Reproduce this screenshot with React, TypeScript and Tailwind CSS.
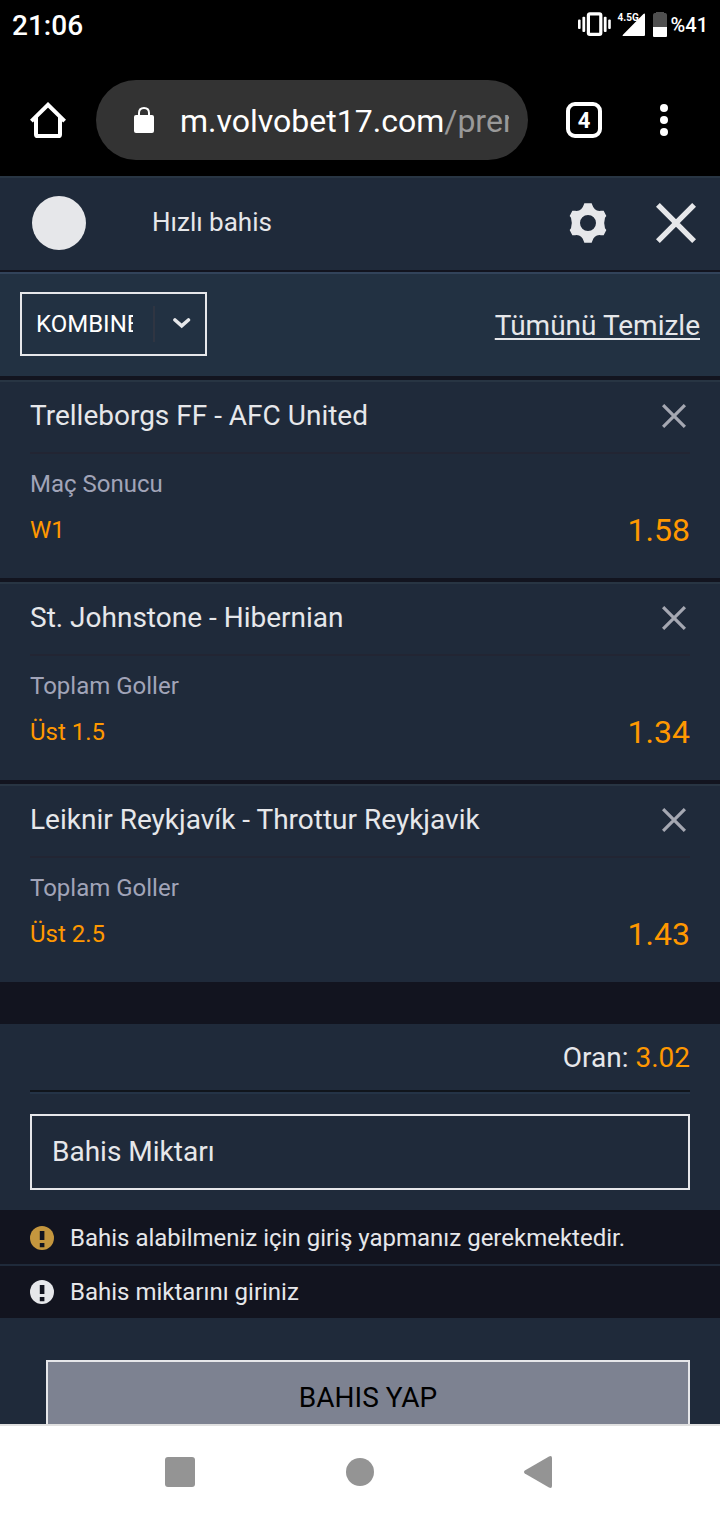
import React, { useState } from "react";

type Bet = { id: number; match: string; market: string; pick: string; odd: string };

const BETS: Bet[] = [
  { id: 1, match: "Trelleborgs FF - AFC United", market: "Maç Sonucu", pick: "W1", odd: "1.58" },
  { id: 2, match: "St. Johnstone - Hibernian", market: "Toplam Goller", pick: "Üst 1.5", odd: "1.34" },
  { id: 3, match: "Leiknir Reykjavík - Throttur Reykjavik", market: "Toplam Goller", pick: "Üst 2.5", odd: "1.43" },
];

function StatusBar() {
  return (
    <div className="flex h-[50px] items-center justify-between px-3 text-white">
      <time className="pt-0.5 text-[28px] leading-8 font-medium">21:06</time>
      <div className="flex items-center">
        <svg viewBox="0 0 34 26" className="mr-2 h-[26px] w-[34px]" fill="#fff" aria-hidden="true">
          <rect x="11.4" y="1.8" width="12.4" height="20.6" rx="1.4" fill="none" stroke="#fff" strokeWidth="3.2" />
          <rect x="5.4" y="4.8" width="2.8" height="15.2" rx="1" />
          <rect x="1" y="7.6" width="2.6" height="9.4" rx="1" />
          <rect x="26.8" y="4.8" width="2.8" height="15.2" rx="1" />
          <rect x="31.2" y="7.6" width="2.6" height="9.4" rx="1" />
        </svg>
        <div className="relative mr-2 h-[26px] w-[26px]">
          <svg viewBox="0 0 26 26" className="h-full w-full" aria-hidden="true">
            <path d="M4.2 22.4 24.4 2Q26 .6 26 2.8V23Q26 24 25 24H4.8Q2.6 24 4.2 22.4Z" fill="#fff" />
          </svg>
          <span className="absolute top-0 -left-px text-[10px] leading-3 font-bold">4.5G</span>
        </div>
        <svg viewBox="0 0 14 26" className="mr-1 h-[26px] w-[14px]" aria-hidden="true">
          <path d="M4 -1H10Q11 -1 11 0V1H12.5Q14 1.4 14 3V15H0V3Q0 1.4 1.5 1H3V0Q3 -1 4 -1Z" fill="#505050" />
          <path d="M0 15H14V24Q14 25 13 25H1Q0 25 0 24Z" fill="#fff" />
        </svg>
        <span className="text-xl leading-6 font-medium">%41</span>
      </div>
    </div>
  );
}

function BrowserBar() {
  return (
    <div className="flex items-center pt-[30px] pr-4 pb-4 pl-2">
      <button type="button" aria-label="Ana sayfa" className="flex h-20 w-20 shrink-0 items-center justify-center">
        <svg viewBox="0 0 36 36" className="h-9 w-9" fill="none" stroke="#fff" strokeWidth="4">
          <path d="M1.4 19.2 18 2.8 34.6 19.2" />
          <path d="M6 15V32.4Q6 34 7.6 34H28.4Q30 34 30 32.4V15" />
        </svg>
      </button>
      <button
        type="button"
        className="mr-4 ml-2 flex h-20 min-w-0 flex-1 items-center rounded-full bg-[#333333] pr-[19px] pl-[38px]"
      >
        <svg viewBox="0 0 20 26" className="mr-[26px] h-[26px] w-5 shrink-0" aria-hidden="true">
          <rect x="0" y="8" width="20" height="18" rx="2" fill="#fff" />
          <path d="M5 9V6Q5 1 10 1T15 6V9" fill="none" stroke="#fff" strokeWidth="2" />
        </svg>
        <span className="min-w-0 flex-1 overflow-hidden pt-0.5 text-left text-[32px] leading-10 whitespace-nowrap text-white">
          m.volvobet17.com<span className="text-[#999999]">/prem</span>
        </span>
      </button>
      <button type="button" aria-label="Sekmeler" className="flex h-20 w-20 shrink-0 items-center justify-center">
        <span className="flex h-9 w-9 items-center justify-center rounded-[9px] border-4 border-white pt-0.5 text-[22px] leading-6 font-bold text-white">
          4
        </span>
      </button>
      <button type="button" aria-label="Menü" className="flex h-20 w-20 shrink-0 flex-col items-center justify-center gap-1">
        <span className="h-2 w-2 rounded-full bg-white" />
        <span className="h-2 w-2 rounded-full bg-white" />
        <span className="h-2 w-2 rounded-full bg-white" />
      </button>
    </div>
  );
}

function SlipHeader() {
  return (
    <header className="flex h-24 shrink-0 items-center border-t-2 border-b-2 border-t-[#283543] border-b-[#12141f] pr-3 pb-0.5 pl-8">
      <input
        type="checkbox"
        id="quick-bet"
        className="h-[54px] w-[54px] cursor-pointer appearance-none rounded-full bg-[#e6e7ea]"
      />
      <label htmlFor="quick-bet" className="ml-[66px] flex-1 pb-0.5 text-[26px] leading-8">
        Hızlı bahis
      </label>
      <div className="flex gap-6">
        <button type="button" aria-label="Ayarlar" className="flex h-16 w-16 items-center justify-center">
          <svg viewBox="-60 -60 120 120" className="h-10 w-10" fill="#e6e7ea">
            <path
              fillRule="evenodd"
              d="M-11-59H11L13-54Q18-37 34-36L39-37H47L55-21 51-16Q46 0 51 16L55 21 47 37H39L34 36Q18 37 13 54L11 59H-11L-13 54Q-18 37-34 36L-39 37H-47L-55 21-51 16Q-46 0-51-16L-55-21-47-37H-39L-34-36Q-18-37-13-54ZM0-24A24 24 0 1 0 0 24 24 24 0 1 0 0-24Z"
            />
          </svg>
        </button>
        <button type="button" aria-label="Kapat" className="flex h-16 w-16 items-center justify-center">
          <svg viewBox="0 0 40 40" className="h-10 w-10" stroke="#e6e7ea" strokeWidth="5.4">
            <path d="M1.9 1.9 38.1 38.1M38.1 1.9 1.9 38.1" />
          </svg>
        </button>
      </div>
    </header>
  );
}

function SlipToolbar({ onClear }: { onClear: () => void }) {
  return (
    <div className="flex shrink-0 items-center justify-between border-t-2 border-[#32435a] bg-[#223142] px-5 pt-[18px] pb-5">
      <div className="relative">
        <select
          aria-label="Bahis türü"
          className="block h-16 w-[187px] appearance-none border-2 border-[#e6e7ea] bg-transparent pr-[72px] pl-3.5 text-2xl text-white"
        >
          <option>KOMBINE</option>
          <option>TEKLİ</option>
          <option>SİSTEM</option>
        </select>
        <div className="pointer-events-none absolute inset-y-0 right-4 flex items-center gap-[18px]">
          <span className="h-9 w-0.5 bg-[#2f3542]" />
          <svg viewBox="0 0 18 12" className="h-3 w-[18px]" fill="none" stroke="#e6e7ea" strokeWidth="3.6" strokeLinecap="round">
            <path d="M2 2 8.7 7.8 15.4 2" />
          </svg>
        </div>
      </div>
      <button
        type="button"
        onClick={onClear}
        className="pt-1 text-[28px] leading-9 underline decoration-2 underline-offset-[3px]"
      >
        Tümünü Temizle
      </button>
    </div>
  );
}

function BetCard({ bet, onRemove }: { bet: Bet; onRemove: () => void }) {
  return (
    <li className="border-t-2 border-[#283543] bg-[#1f2a3a] px-[30px]">
      <div className="flex h-[72px] items-center justify-between border-b-2 border-[#222533] pb-0.5">
        <h2 className="text-[28px] leading-9">{bet.match}</h2>
        <button type="button" aria-label="Bahsi kaldır" onClick={onRemove} className="flex h-8 w-8 items-center justify-center">
          <svg viewBox="0 0 24 24" className="h-6 w-6" stroke="#a5a8b2" strokeWidth="3.2">
            <path d="M1.1 1.1 22.9 22.9M22.9 1.1 1.1 22.9" />
          </svg>
        </button>
      </div>
      <div className="pt-3 pb-7">
        <p className="text-2xl leading-9 text-[#a1a4b8]">{bet.market}</p>
        <div className="mt-2 flex items-center justify-between text-[#ff9800]">
          <span className="text-2xl leading-10">{bet.pick}</span>
          <span className="text-[32px] leading-10">{bet.odd}</span>
        </div>
      </div>
    </li>
  );
}

function AlertIcon({ warn }: { warn: boolean }) {
  return (
    <svg viewBox="0 0 24 24" className="h-6 w-6 shrink-0" aria-hidden="true">
      <circle cx="12" cy="12" r="12" fill={warn ? "#c4963e" : "#e6e7ea"} />
      <path d="M9.8 5H14.4V14H9.8ZM9.8 17H14.4V21.2H9.8Z" fill="#12141f" />
    </svg>
  );
}

function SystemNav() {
  return (
    <nav className="h-24 shrink-0 border-t-2 border-[#e0e0e0] bg-white pb-0.5">
      <div className="mx-auto grid h-full w-3/4 grid-cols-3">
        <button type="button" aria-label="Son uygulamalar" className="flex items-center justify-center">
          <span className="h-[30px] w-[30px] rounded-[3px] bg-[#949494]" />
        </button>
        <button type="button" aria-label="Ana ekran" className="flex items-center justify-center">
          <span className="h-7 w-7 rounded-full bg-[#949494]" />
        </button>
        <button type="button" aria-label="Geri" className="flex items-center justify-center">
          <svg viewBox="0 0 32 32" className="h-8 w-8" fill="#949494">
            <path d="M.8 14.6 25 .4Q28-.8 28 2V30Q28 32.8 25 31.6L.8 17.4Q-.8 16 .8 14.6Z" />
          </svg>
        </button>
      </div>
    </nav>
  );
}

export default function App() {
  const [bets, setBets] = useState(BETS);
  return (
    <div className="flex h-dvh flex-col bg-[#1f2a3a] font-[Roboto,sans-serif] text-[#e6e7ea]">
      <div className="shrink-0 bg-black">
        <StatusBar />
        <BrowserBar />
      </div>
      <main className="flex min-h-0 flex-1 flex-col overflow-y-auto [scrollbar-width:none]">
        <SlipHeader />
        <SlipToolbar onClear={() => setBets([])} />
        <ul className="flex shrink-0 flex-col gap-1 bg-[#12141f] pt-1 pb-[42px]">
          {bets.map((bet) => (
            <BetCard key={bet.id} bet={bet} onRemove={() => setBets(bets.filter((b) => b.id !== bet.id))} />
          ))}
        </ul>
        <section className="shrink-0 px-[30px] pb-5">
          <p className="border-b-2 border-[#10151c] pt-4 pb-3.5 text-right text-[28px] leading-9">
            Oran: <span className="text-[#ff9800]">3.02</span>
          </p>
          <div className="border-t-2 border-[#243346] pt-5">
            <input
              aria-label="Bahis Miktarı"
              inputMode="decimal"
              placeholder="Bahis Miktarı"
              className="block h-[76px] w-full border-2 border-[#e6e7ea] bg-transparent px-5 pb-0.5 text-[28px] placeholder:text-[#e6e7ea]"
            />
          </div>
        </section>
        <div className="shrink-0 bg-[#12141f] text-2xl leading-[52px]">
          <p className="flex items-center gap-4 border-b-2 border-[#1f2a3a] px-[30px] pt-0.5">
            <AlertIcon warn />
            Bahis alabilmeniz için giriş yapmanız gerekmektedir.
          </p>
          <p className="flex items-center gap-4 px-[30px]">
            <AlertIcon warn={false} />
            Bahis miktarını giriniz
          </p>
        </div>
        <div className="shrink-0 pt-[42px] pr-[30px] pb-8 pl-[46px]">
          <button type="button" className="block h-[76px] w-full border-2 border-[#e6e7ea] bg-[#7d8291] text-[28px] text-black">
            BAHIS YAP
          </button>
        </div>
      </main>
      <SystemNav />
    </div>
  );
}
